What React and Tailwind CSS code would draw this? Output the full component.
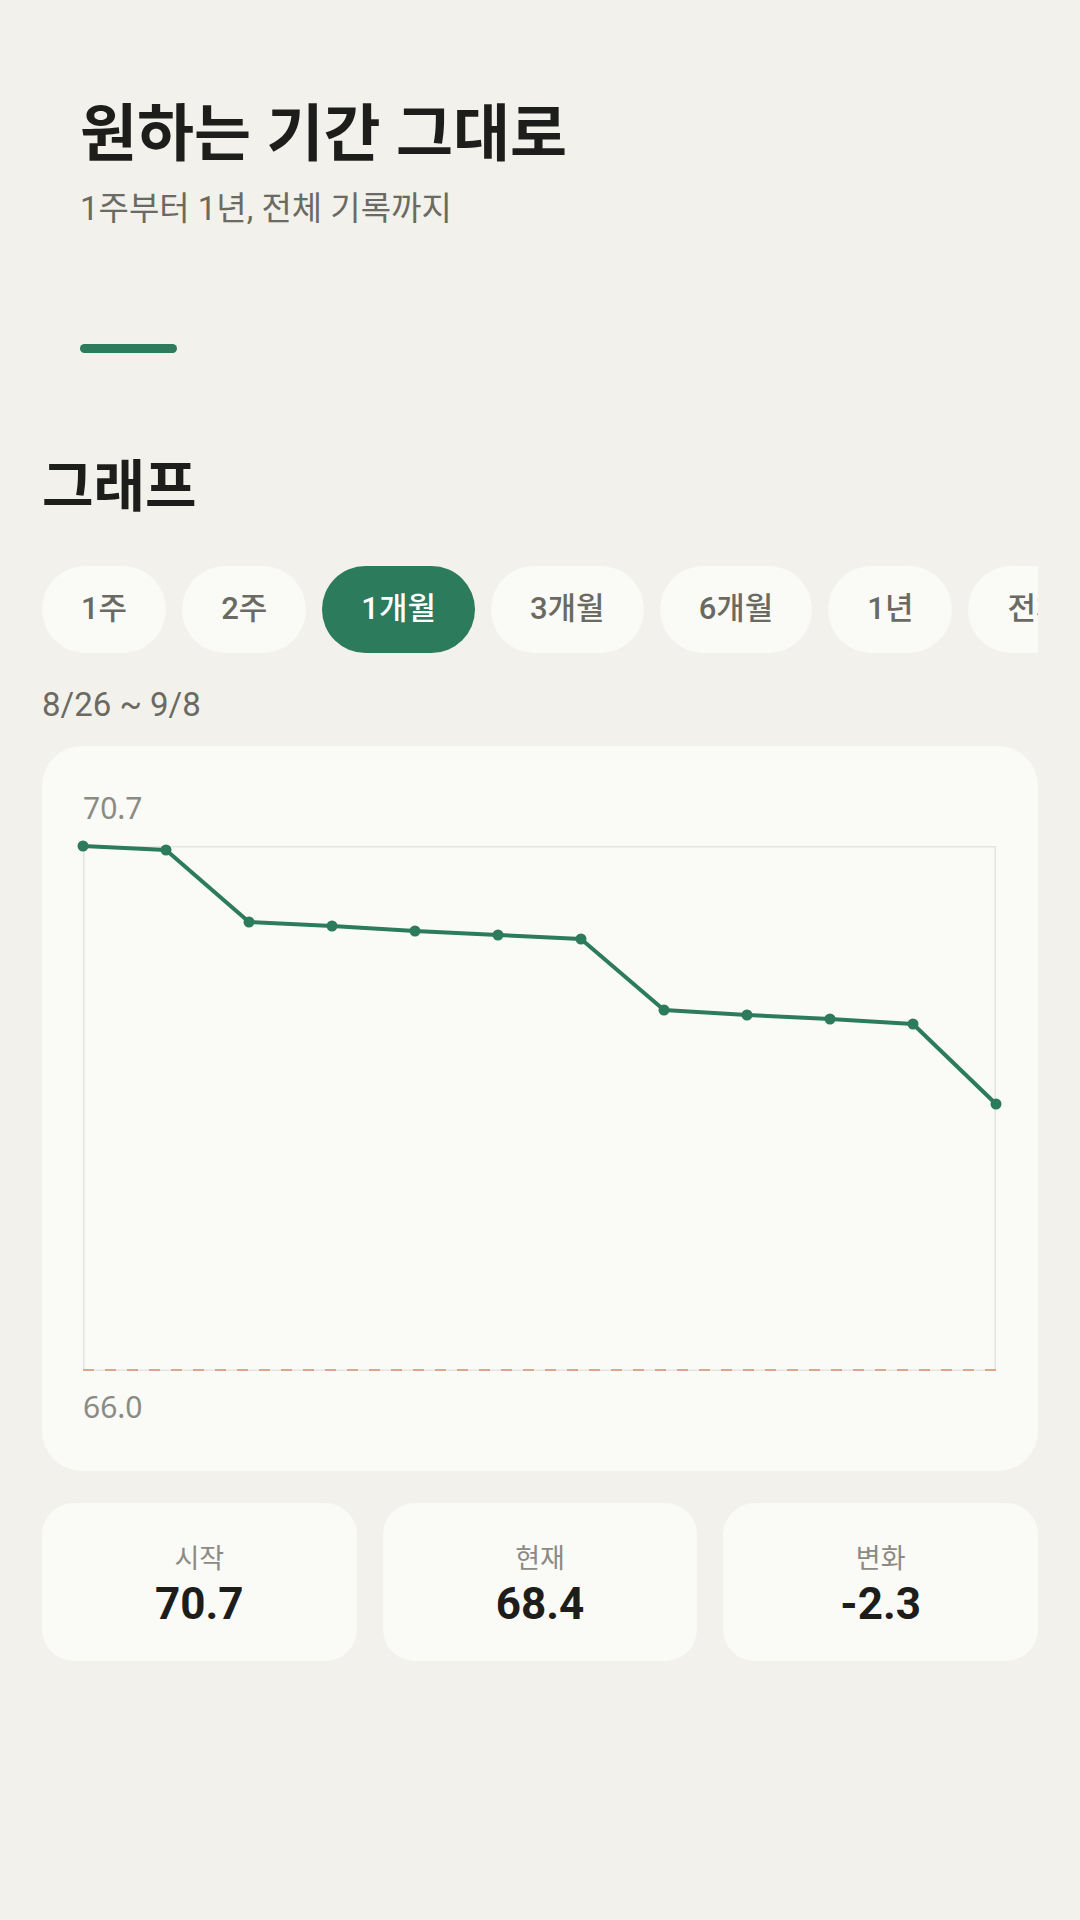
import React, { useState } from 'react';

const periods = ['1주', '2주', '1개월', '3개월', '6개월', '1년', '전체'];

// y offsets (px) of each point inside the plot box, 0 = 70.7
const points = [0, 4, 76, 80, 85, 89, 93, 164, 169, 173, 178, 258];

const Chart = () => {
  const w = 913;
  const h = 525;
  const step = w / (points.length - 1);
  const line = points.map((y, i) => `${i * step},${y}`).join(' ');

  return (
    <svg width={w} height={h} viewBox={`0 0 ${w} ${h}`} className="block overflow-visible">
      <rect x="0.75" y="0.75" width={w - 1.5} height={h - 1.5} fill="none" stroke="#e6e4df" strokeWidth="1.5" />
      <line x1="0" y1={h - 1} x2={w} y2={h - 1} stroke="#dfa48c" strokeWidth="2" strokeDasharray="11 11" />
      <polyline points={line} fill="none" stroke="#2b7b5c" strokeWidth="4" strokeLinejoin="round" strokeLinecap="round" />
      {points.map((y, i) => (
        <circle key={i} cx={i * step} cy={y} r="5.5" fill="#2b7b5c" />
      ))}
    </svg>
  );
};

const App = () => {
  const [active, setActive] = useState('1개월');

  return (
    <div className="min-h-[1920px] bg-[#f2f1ec] font-['Roboto','Noto_Sans_CJK_KR',sans-serif] text-[#1d1d1b]">
      <div className="pl-[80px] pt-[98px]">
        <h1 className="text-[62px] font-bold leading-[74px]">원하는 기간 그대로</h1>
        <p className="mt-[17px] text-[33px] leading-[40px] text-[#6b6a62]">1주부터 1년, 전체 기록까지</p>
        <div className="mt-[115px] h-[9px] w-[97px] rounded-full bg-[#2b7b5c]" />
      </div>

      <div className="px-[42px]">
        <h2 className="mt-[100px] text-[56px] font-bold leading-[68px]">그래프</h2>

        <div className="mt-[45px] flex gap-[16px] overflow-hidden">
          {periods.map((p) => (
            <button
              key={p}
              onClick={() => setActive(p)}
              className={`flex h-[87px] shrink-0 items-center rounded-full px-[39px] text-[31px] font-medium ${
                active === p ? 'bg-[#2b7b5c] text-white' : 'bg-[#fafaf7] text-[#6b6a62]'
              }`}
            >
              {p}
            </button>
          ))}
        </div>

        <p className="mt-[34px] text-[33px] leading-[36px] text-[#6b6a62]">8/26 ~ 9/8</p>

        <div className="mt-[23px] rounded-[40px] bg-[#fafaf7] px-[41px] pt-[44px] pb-[46px]">
          <p className="font-['Noto_Sans',sans-serif] text-[30px] leading-[36px] text-[#8b8a84]">70.7</p>
          <div className="mt-[20px]">
            <Chart />
          </div>
          <p className="mt-[18px] font-['Noto_Sans',sans-serif] text-[30px] leading-[36px] text-[#8b8a84]">66.0</p>
        </div>

        <div className="mt-[32px] grid grid-cols-3 gap-[26px]">
          {[
            ['시작', '70.7'],
            ['현재', '68.4'],
            ['변화', '-2.3'],
          ].map(([label, value]) => (
            <div key={label} className="flex h-[158px] flex-col items-center justify-center rounded-[32px] bg-[#fafaf7] pt-[9px]">
              <span className="text-[27px] leading-[32px] text-[#8c8a83]">{label}</span>
              <span className="mt-[3px] text-[44px] font-bold leading-[53px] text-[#1d1d1b]">{value}</span>
            </div>
          ))}
        </div>
      </div>
    </div>
  );
};

export default App;
